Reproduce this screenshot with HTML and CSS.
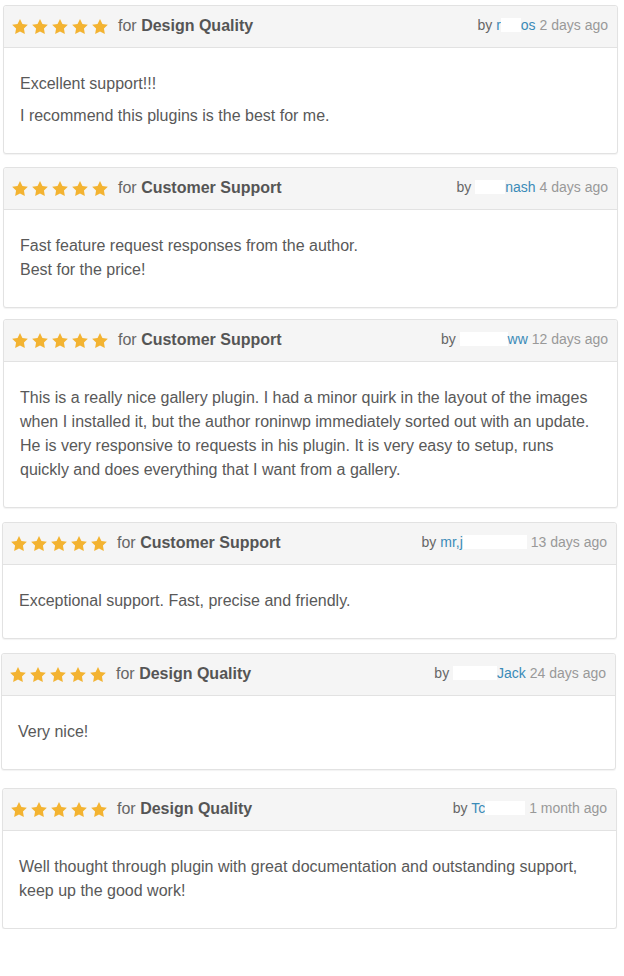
FILE: index.html
```html
<!DOCTYPE html>
<html lang="en">
<head>
<meta charset="utf-8">
<title>Reviews</title>
<link rel="stylesheet" href="styles.css">
</head>
<body>
<svg width="0" height="0" class="defs" aria-hidden="true">
  <defs>
    <symbol id="star" viewBox="2 2 20 19.1">
      <path d="M12 2l3.09 6.26L22 9.27l-5 4.87 1.18 6.88L12 17.77l-6.18 3.25L7 14.14 2 9.27l6.91-1.01z"/>
    </symbol>
  </defs>
</svg>
<main class="reviews">

  <article class="review">
    <header class="review-head">
      <div class="rating">
        <span class="stars"><svg><use href="#star"/></svg><svg><use href="#star"/></svg><svg><use href="#star"/></svg><svg><use href="#star"/></svg><svg><use href="#star"/></svg></span>
        <span class="for">for <strong>Design Quality</strong></span>
      </div>
      <div class="meta"><span class="by">by</span> <a class="user" href="#">r<span class="redact w20"></span>os</a> 2 days ago</div>
    </header>
    <div class="review-body">
      <p>Excellent support!!!</p>
      <p>I recommend this plugins is the best for me.</p>
    </div>
  </article>

  <article class="review gap-13">
    <header class="review-head">
      <div class="rating">
        <span class="stars"><svg><use href="#star"/></svg><svg><use href="#star"/></svg><svg><use href="#star"/></svg><svg><use href="#star"/></svg><svg><use href="#star"/></svg></span>
        <span class="for">for <strong>Customer Support</strong></span>
      </div>
      <div class="meta"><span class="by">by</span> <a class="user" href="#"><span class="redact w30"></span>nash</a> 4 days ago</div>
    </header>
    <div class="review-body">
      <p>Fast feature request responses from the author.<br>Best for the price!</p>
    </div>
  </article>

  <article class="review gap-11">
    <header class="review-head">
      <div class="rating">
        <span class="stars"><svg><use href="#star"/></svg><svg><use href="#star"/></svg><svg><use href="#star"/></svg><svg><use href="#star"/></svg><svg><use href="#star"/></svg></span>
        <span class="for">for <strong>Customer Support</strong></span>
      </div>
      <div class="meta"><span class="by">by</span> <a class="user" href="#"><span class="redact w48"></span>ww</a> 12 days ago</div>
    </header>
    <div class="review-body">
      <p>This is a really nice gallery plugin. I had a minor quirk in the layout of the images when I installed it, but the author roninwp immediately sorted out with an update. He is very responsive to requests in his plugin. It is very easy to setup, runs quickly and does everything that I want from a gallery.</p>
    </div>
  </article>

  <article class="review gap-14 shift-1">
    <header class="review-head">
      <div class="rating">
        <span class="stars"><svg><use href="#star"/></svg><svg><use href="#star"/></svg><svg><use href="#star"/></svg><svg><use href="#star"/></svg><svg><use href="#star"/></svg></span>
        <span class="for">for <strong>Customer Support</strong></span>
      </div>
      <div class="meta"><span class="by">by</span> <a class="user" href="#">mr,j<span class="redact w64"></span></a> 13 days ago</div>
    </header>
    <div class="review-body">
      <p>Exceptional support. Fast, precise and friendly.</p>
    </div>
  </article>

  <article class="review gap-14 shift-2">
    <header class="review-head">
      <div class="rating">
        <span class="stars"><svg><use href="#star"/></svg><svg><use href="#star"/></svg><svg><use href="#star"/></svg><svg><use href="#star"/></svg><svg><use href="#star"/></svg></span>
        <span class="for">for <strong>Design Quality</strong></span>
      </div>
      <div class="meta"><span class="by">by</span> <a class="user" href="#"><span class="redact w44"></span>Jack</a> 24 days ago</div>
    </header>
    <div class="review-body">
      <p>Very nice!</p>
    </div>
  </article>

  <article class="review gap-18 shift-1">
    <header class="review-head">
      <div class="rating">
        <span class="stars"><svg><use href="#star"/></svg><svg><use href="#star"/></svg><svg><use href="#star"/></svg><svg><use href="#star"/></svg><svg><use href="#star"/></svg></span>
        <span class="for">for <strong>Design Quality</strong></span>
      </div>
      <div class="meta"><span class="by">by</span> <a class="user" href="#">Tc<span class="redact w40"></span></a> 1 month ago</div>
    </header>
    <div class="review-body">
      <p>Well thought through plugin with great documentation and outstanding support, keep up the good work!</p>
    </div>
  </article>

</main>
</body>
</html>
```

FILE: styles.css
```css
* {
  box-sizing: border-box;
}

html, body {
  margin: 0;
  padding: 0;
  background: #ffffff;
}

body {
  font-family: "Liberation Sans", Arial, sans-serif;
  color: #595959;
}

.defs {
  position: absolute;
  width: 0;
  height: 0;
  overflow: hidden;
}

.reviews {
  padding: 5px 0 0 3px;
  width: 618px;
  display: flex;
  flex-direction: column;
}

.review {
  width: 615px;
  border: 1px solid #e2e2e2;
  border-radius: 3px;
  background: #fff;
  box-shadow: 0 1px 1px rgba(0, 0, 0, 0.05);
}

.gap-11 { margin-top: 11px; }
.gap-13 { margin-top: 13px; }
.gap-14 { margin-top: 14px; }
.gap-18 { margin-top: 18px; }
.shift-1 { margin-left: -1px; }
.shift-2 { margin-left: -2px; }

.review-head {
  display: flex;
  align-items: center;
  justify-content: space-between;
  height: 42px;
  padding: 0 9px 1px 8px;
  background: #f5f5f5;
  border-bottom: 1px solid #e2e2e2;
  border-radius: 3px 3px 0 0;
}

.rating {
  display: flex;
  align-items: center;
}

.stars {
  display: flex;
  gap: 4px;
  margin-right: 10px;
  margin-top: 1px;
}

.stars svg {
  width: 16px;
  height: 15px;
  fill: #f3b331;
  display: block;
}

.for {
  font-size: 16px;
  line-height: 24px;
  color: #666666;
}

.for strong {
  font-weight: bold;
  color: #555555;
}

.meta {
  font-size: 14px;
  line-height: 20px;
  color: #999999;
  margin-top: -2px;
}

.meta .by {
  color: #666666;
}

.user {
  color: #3a8bb8;
  text-decoration: none;
}

.redact {
  display: inline-block;
  height: 14px;
  vertical-align: -2px;
  background: #ffffff;
}

.w20 { width: 20px; }
.w30 { width: 30px; }
.w40 { width: 40px; }
.w44 { width: 44px; }
.w48 { width: 48px; }
.w64 { width: 64px; }

.review-body {
  padding: 24px 16px 25px;
  font-size: 16px;
  line-height: 24px;
}

.review-body p {
  margin: 0;
}

.review-body p + p {
  margin-top: 8px;
}
```
